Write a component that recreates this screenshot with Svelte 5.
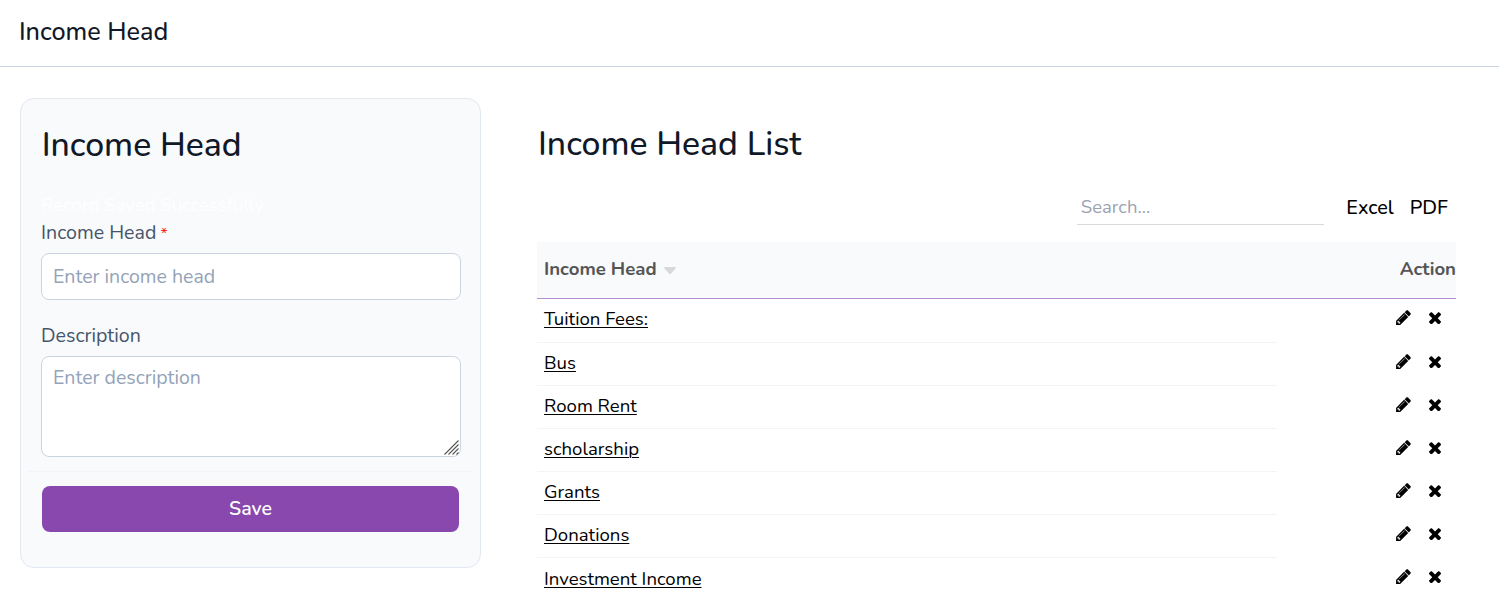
<script lang="ts">
	let name = $state('');
	let description = $state('');
	let search = $state('');

	const incomeHeads = [
		'Tuition Fees:',
		'Bus',
		'Room Rent',
		'scholarship',
		'Grants',
		'Donations',
		'Investment Income'
	];

	const rows = $derived(
		incomeHeads.filter((head) => head.toLowerCase().includes(search.toLowerCase()))
	);
</script>

<svelte:head>
	<title>Income Head</title>
</svelte:head>

<div class="page">
	<header class="page-header">
		<h1>Income Head</h1>
	</header>

	<main class="content">
		<form class="card" onsubmit={(e) => e.preventDefault()}>
			<h2>Income Head</h2>
			<p class="message">Record Saved Successfully</p>

			<label for="name">Income Head <span class="required">*</span></label>
			<input id="name" type="text" placeholder="Enter income head" bind:value={name} />

			<label for="description" class="description-label">Description</label>
			<div class="textarea-wrap">
				<textarea id="description" placeholder="Enter description" bind:value={description}
				></textarea>
				<svg class="grip" width="15" height="15" viewBox="0 0 15 15">
					<path d="M.5 14.5l14-14M4.5 14.5l10-10M8.5 14.5l6-6M12.5 14.5l2-2" />
				</svg>
			</div>

			<div class="form-footer">
				<button class="btn-save" type="submit">Save</button>
			</div>
		</form>

		<section class="list">
			<h2>Income Head List</h2>

			<div class="toolbar">
				<input class="search" type="text" placeholder="Search..." bind:value={search} />
				<button class="btn-export excel" type="button">Excel</button>
				<button class="btn-export" type="button">PDF</button>
			</div>

			<div class="table">
				<div class="table-head">
					<span class="head-name">
						<span>Income Head</span>
						<svg class="sort" width="12" height="7" viewBox="0 0 12 7">
							<path d="M1 0h10c1 0 1.2.8.6 1.4L7 6.4a1.4 1.4 0 0 1-2 0L.4 1.4C-.2.8 0 0 1 0z" />
						</svg>
					</span>
					<span class="head-action">Action</span>
				</div>
				<div class="rows">
					{#each rows as head}
						<div class="row">
							<div class="cell"><a href="#edit">{head}</a></div>
							<div class="actions">
								<button type="button" aria-label="Edit">
									<svg class="pencil" width="15" height="15" viewBox="-10 -10 1556 1556">
										<path
											d="M363 1408l91-91-235-235-91 91v107h128v128h107zM886 480c0-13-9-22-22-22-6 0-12 2-17 7l-542 542c-5 5-7 11-7 17 0 13 9 22 22 22 6 0 12-2 17-7l542-542c5-5 7-11 7-17zM832 288l416 416-832 832H0v-416zM1515 384c0 34-14 67-37 90l-166 166-416-416 166-165c23-24 56-38 90-38s67 14 91 38l235 234c23 24 37 57 37 91z"
										/>
									</svg>
								</button>
								<button type="button" aria-label="Delete">
									<svg width="12" height="12" viewBox="110 238 1188 1188">
										<path
											d="M1298 1214c0 25-10 50-28 68l-136 136c-18 18-43 28-68 28s-50-10-68-28L704 1124l-294 294c-18 18-43 28-68 28s-50-10-68-28l-136-136c-18-18-28-43-28-68s10-50 28-68l294-294-294-294c-18-18-28-43-28-68s10-50 28-68l136-136c18-18 43-28 68-28s50 10 68 28l294 294 294-294c18-18 43-28 68-28s50 10 68 28l136 136c18 18 28 43 28 68s-10 50-28 68L976 852l294 294c18 18 28 43 28 68z"
										/>
									</svg>
								</button>
							</div>
						</div>
					{/each}
				</div>
			</div>
		</section>
	</main>
</div>

<style>
	:global(body) {
		margin: 0;
		overflow: hidden;
		background: #fff;
	}

	.page {
		height: 596px;
		overflow: hidden;
		font-family: Nunito, 'Open Sans', 'Noto Sans', sans-serif;
		font-size: 18.5px;
		color: #000;
	}

	.page *,
	.page {
		box-sizing: border-box;
	}

	.page-header {
		height: 67px;
		padding: 15px 19px 0;
		border-bottom: 1px solid #cbd5e1;
	}

	h1,
	h2 {
		margin: 0;
		font-weight: 500;
		color: #111827;
	}

	h1 {
		font-size: 25.2px;
		line-height: 34px;
	}

	h2 {
		font-size: 33.75px;
		line-height: 44px;
	}

	.content {
		display: flex;
		align-items: flex-start;
		gap: 56px;
		padding: 31px 43px 0 20px;
	}

	.card {
		display: flex;
		flex-direction: column;
		flex: none;
		width: 461px;
		height: 470px;
		padding: 24px 19px 0 20px;
		border: 1px solid #e2e8f0;
		border-radius: 14px;
		background: #f8fafc;
	}

	.card h2 {
		padding-left: 0.7px;
	}

	.message {
		margin: 24px 0 0;
		font-size: 18.6px;
		line-height: 28px;
		color: #fff;
	}

	label {
		font-size: 19.6px;
		line-height: 28px;
		color: #475569;
	}

	.required {
		margin-left: -1px;
		font-size: 16px;
		color: #ff1f2d;
	}

	input,
	textarea,
	button {
		font-family: inherit;
	}

	.card input,
	textarea {
		display: block;
		width: 420px;
		padding: 0 11px;
		border: 1px solid #cbd5e1;
		border-radius: 8px;
		outline: none;
		background: #fff;
		font-size: 19.5px;
	}

	.card input {
		height: 47px;
		margin-top: 5px;
	}

	.description-label {
		margin-top: 22px;
	}

	.textarea-wrap {
		position: relative;
		margin-top: 6px;
	}

	textarea {
		height: 101px;
		padding-top: 7px;
		line-height: 28px;
		resize: none;
	}

	.grip {
		position: absolute;
		right: 2px;
		bottom: 2px;
		fill: none;
		stroke: #555;
		stroke-width: 1.1;
	}

	::placeholder {
		color: #94a3b8;
		opacity: 1;
	}

	.form-footer {
		display: flex;
		margin: 14px -11px 0 -13px;
		padding: 14px 13px 0 14px;
		border-top: 1px solid #f1f5f9;
	}

	.btn-save {
		flex: 1;
		height: 46px;
		padding: 0 0 2px;
		border: none;
		border-radius: 8px;
		background: #8848ae;
		color: #fff;
		font-size: 19.5px;
		font-weight: 600;
	}

	.list {
		flex: 1;
		padding-top: 24px;
	}

	.list h2 {
		padding-left: 1px;
	}

	.toolbar {
		display: flex;
		justify-content: flex-end;
		height: 60px;
		margin-top: 16px;
		padding: 6px 8px 0 0;
	}

	.search {
		width: 247px;
		height: 37px;
		margin: 0 22.5px 0 0;
		padding: 2px 4px 0;
		border: none;
		border-bottom: 1px solid #d9d9d9;
		outline: none;
		font-size: 18.5px;
	}

	.search::placeholder {
		color: #9ca3af;
	}

	.btn-export {
		height: 38px;
		padding: 0;
		border: none;
		background: none;
		color: #000;
		font-size: 19.8px;
		font-weight: 500;
	}

	.excel {
		margin-right: 16px;
	}

	.table-head {
		display: flex;
		justify-content: space-between;
		height: 57px;
		padding: 13px 0 0 7px;
		border-bottom: 1px solid #b98fd0;
		background: #f8fafc;
		font-size: 18.6px;
		font-weight: 700;
		line-height: 28px;
		color: #555;
	}

	.head-name {
		display: flex;
		gap: 7px;
	}

	.sort {
		margin-top: 12px;
		fill: #d6d8da;
	}

	.rows {
		padding-top: 0.4px;
	}

	.row {
		display: flex;
		height: 43.175px;
	}

	.cell {
		width: 740px;
		padding: 6.08px 7px 0;
		border-bottom: 1px solid #f3f4f6;
		font-size: 18.6px;
		line-height: 28px;
	}

	.cell a {
		color: #000;
		text-decoration: underline;
		text-decoration-thickness: 1px;
		text-underline-offset: 2px;
	}

	.actions {
		display: flex;
		align-items: flex-start;
		gap: 18px;
		padding: 11px 0 0 119px;
	}

	.actions button {
		display: flex;
		padding: 0;
		border: none;
		background: none;
	}

	.actions button + button {
		margin-top: 2px;
	}

	.pencil {
		stroke: #000;
		stroke-width: 18;
	}
</style>
